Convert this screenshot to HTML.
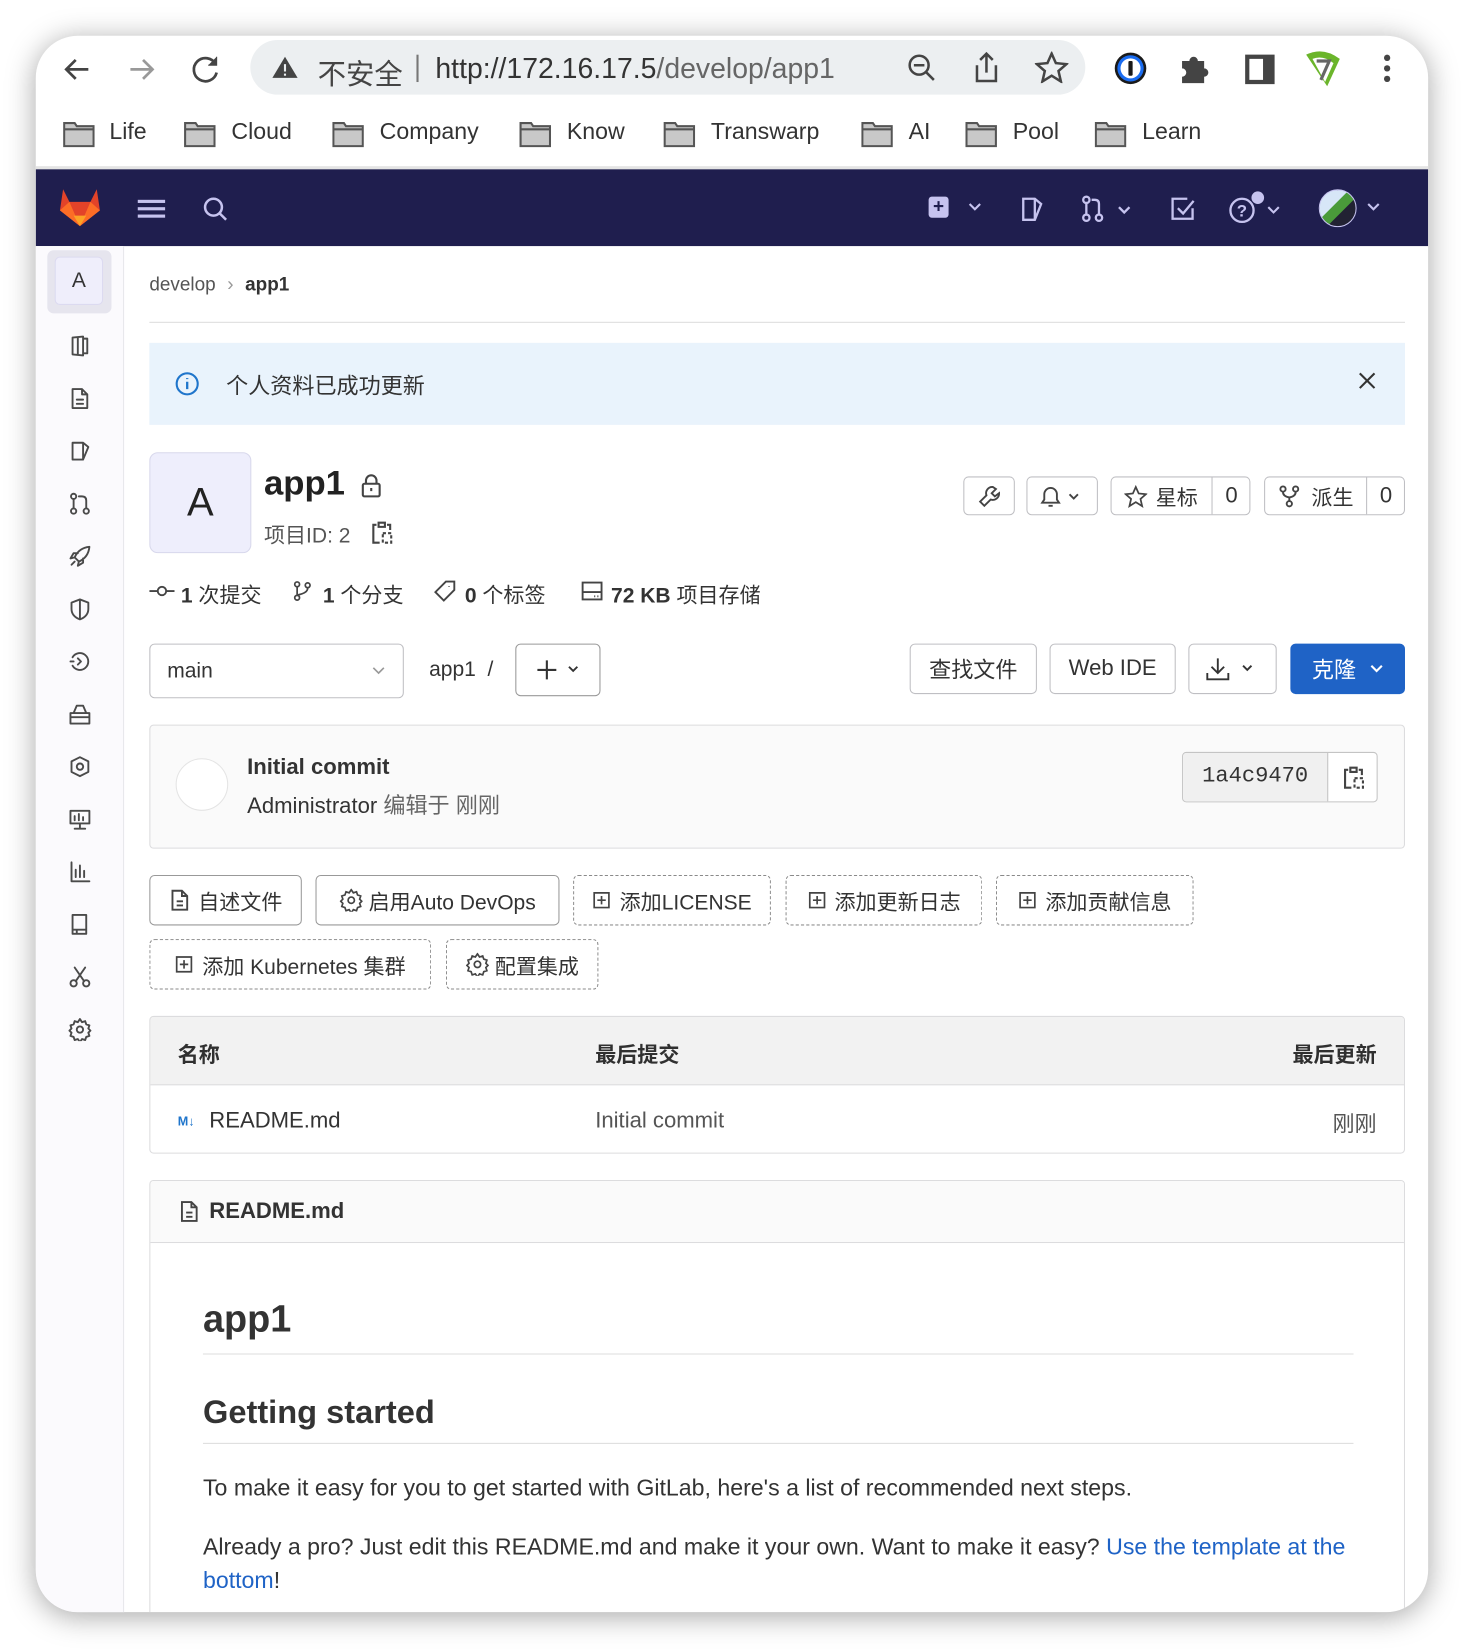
<!DOCTYPE html>
<html><head><meta charset="utf-8"><style>
*{box-sizing:border-box;margin:0;padding:0}
html,body{width:1466px;height:1650px;overflow:hidden;background:#fff}
body{font-family:"Liberation Sans","Noto Sans CJK SC",sans-serif;color:#303030}
#s{position:absolute;left:0;top:0;width:1394px;height:1568px;transform:scale(1.05165);transform-origin:0 0}
.a{position:absolute}
#win{left:34px;top:34px;width:1324px;height:1499px;border-radius:40px;box-shadow:0 4px 28px rgba(0,0,0,.35);background:#fff;overflow:hidden}
.t{position:absolute;white-space:nowrap}
.btn{position:absolute;border:1px solid #bfbfc3;border-radius:5px;background:#fff;display:flex;align-items:center;justify-content:center;font-size:21px;color:#333}
.dash{border:1.5px dashed #8a8a8a}
svg{display:block}
.ic{stroke:#4a4a4a;fill:none;stroke-width:1.8;stroke-linecap:round;stroke-linejoin:round}
.side svg{position:absolute;left:31px}
</style></head><body><div id="s">
<div id="win" class="a">
 <svg class="a" style="left:24px;top:16px" width="32" height="32" viewBox="0 0 32 32"><path d="M26 16H6M14 7l-9 9 9 9" stroke="#444" stroke-width="2.6" fill="none"/></svg>
 <svg class="a" style="left:84px;top:16px" width="32" height="32" viewBox="0 0 32 32"><path d="M6 16h20M18 7l9 9-9 9" stroke="#999" stroke-width="2.6" fill="none"/></svg>
 <svg class="a" style="left:146px;top:16px" width="32" height="32" viewBox="0 0 32 32"><path d="M25 11A11 11 0 1 0 26 19" stroke="#444" stroke-width="2.6" fill="none"/><path d="M26 4v8h-8" fill="#444" stroke="#444" stroke-width="1"/></svg>
 <div class="a" style="left:204px;top:4px;width:794px;height:52px;border-radius:26px;background:#eceff1"></div>
 <svg class="a" style="left:224px;top:18px" width="26" height="24" viewBox="0 0 26 24"><path d="M13 2L25 22H1z" fill="#444"/><rect x="12" y="9" width="2" height="7" fill="#eceff1"/><rect x="12" y="18" width="2" height="2" fill="#eceff1"/></svg>
 <div class="t" style="left:268px;top:15px;font-size:27px;color:#444">不安全</div>
 <div class="a" style="left:362px;top:18px;width:2px;height:26px;background:#777"></div>
 <div class="t" style="left:380px;top:16px;font-size:27px;color:#333">http://172.16.17.5<span style="color:#666">/develop/app1</span></div>
 <svg class="a" style="left:828px;top:16px" width="30" height="30" viewBox="0 0 30 30"><circle cx="12" cy="12" r="9" stroke="#444" stroke-width="2.4" fill="none"/><path d="M7 12h10M19 19l7 7" stroke="#444" stroke-width="2.4"/></svg>
 <svg class="a" style="left:890px;top:14px" width="28" height="32" viewBox="0 0 28 32"><path d="M14 3v18M8 9l6-6 6 6M5 14v15h18V14" stroke="#444" stroke-width="2.4" fill="none"/></svg>
 <svg class="a" style="left:950px;top:15px" width="32" height="30" viewBox="0 0 32 30"><path d="M16 2l4 9 10 1-7.5 6.5 2.3 10L16 23l-8.8 5.5 2.3-10L2 12l10-1z" stroke="#444" stroke-width="2.4" fill="none"/></svg>
 <svg class="a" style="left:1024px;top:14px" width="34" height="34" viewBox="0 0 34 34"><circle cx="17" cy="17" r="15" fill="#1a1a1a"/><circle cx="17" cy="17" r="12.5" fill="#1a6cf0"/><circle cx="17" cy="17" r="9.5" fill="#fff"/><rect x="15" y="10" width="4" height="14" rx="1" fill="#1a1a1a"/></svg>
 <svg class="a" style="left:1086px;top:16px" width="32" height="30" viewBox="0 0 32 30"><path d="M4 8h7a4 4 0 1 1 8 0h6v7a4 4 0 1 1 0 8v6H4v-6a4 4 0 1 0 0-8z" fill="#444"/></svg>
 <div class="a" style="left:1150px;top:18px;width:28px;height:28px;border:4px solid #444;border-right-width:11px"></div>
 <svg class="a" style="left:1204px;top:12px" width="40" height="40" viewBox="0 0 40 40"><path d="M4 6q16-8 32 4L24 36z" fill="#6bb52b"/><path d="M10 10q10-4 20 4l-8 18z" fill="#fff"/><path d="M14 12h12l-8 18" stroke="#666" stroke-width="3" fill="none"/></svg>
 <div class="a" style="left:1282px;top:18px;width:6px;height:6px;border-radius:3px;background:#444;box-shadow:0 10px 0 #444,0 20px 0 #444"></div>
 <div class="a" style="left:0;top:70px;width:1324px;height:56px;font-size:22px;color:#333">
  <svg class="a" style="left:26px;top:10px;" width="30" height="26" viewBox="0 0 30 26"><path d="M1 3h10l2 3h16v19H1z" fill="#c8c8c8" stroke="#555" stroke-width="2"/><path d="M1 9h28" stroke="#555" stroke-width="2"/></svg><div class="t" style="left:70px;top:8px">Life</div>
  <svg class="a" style="left:141px;top:10px;" width="30" height="26" viewBox="0 0 30 26"><path d="M1 3h10l2 3h16v19H1z" fill="#c8c8c8" stroke="#555" stroke-width="2"/><path d="M1 9h28" stroke="#555" stroke-width="2"/></svg><div class="t" style="left:186px;top:8px">Cloud</div>
  <svg class="a" style="left:282px;top:10px;" width="30" height="26" viewBox="0 0 30 26"><path d="M1 3h10l2 3h16v19H1z" fill="#c8c8c8" stroke="#555" stroke-width="2"/><path d="M1 9h28" stroke="#555" stroke-width="2"/></svg><div class="t" style="left:327px;top:8px">Company</div>
  <svg class="a" style="left:460px;top:10px;" width="30" height="26" viewBox="0 0 30 26"><path d="M1 3h10l2 3h16v19H1z" fill="#c8c8c8" stroke="#555" stroke-width="2"/><path d="M1 9h28" stroke="#555" stroke-width="2"/></svg><div class="t" style="left:505px;top:8px">Know</div>
  <svg class="a" style="left:597px;top:10px;" width="30" height="26" viewBox="0 0 30 26"><path d="M1 3h10l2 3h16v19H1z" fill="#c8c8c8" stroke="#555" stroke-width="2"/><path d="M1 9h28" stroke="#555" stroke-width="2"/></svg><div class="t" style="left:642px;top:8px">Transwarp</div>
  <svg class="a" style="left:785px;top:10px;" width="30" height="26" viewBox="0 0 30 26"><path d="M1 3h10l2 3h16v19H1z" fill="#c8c8c8" stroke="#555" stroke-width="2"/><path d="M1 9h28" stroke="#555" stroke-width="2"/></svg><div class="t" style="left:830px;top:8px">AI</div>
  <svg class="a" style="left:884px;top:10px;" width="30" height="26" viewBox="0 0 30 26"><path d="M1 3h10l2 3h16v19H1z" fill="#c8c8c8" stroke="#555" stroke-width="2"/><path d="M1 9h28" stroke="#555" stroke-width="2"/></svg><div class="t" style="left:929px;top:8px">Pool</div>
  <svg class="a" style="left:1007px;top:10px;" width="30" height="26" viewBox="0 0 30 26"><path d="M1 3h10l2 3h16v19H1z" fill="#c8c8c8" stroke="#555" stroke-width="2"/><path d="M1 9h28" stroke="#555" stroke-width="2"/></svg><div class="t" style="left:1052px;top:8px">Learn</div>
 </div>
 <div class="a" style="left:0;top:124px;width:1324px;height:3px;background:#e4e4e4"></div>
 <div class="a" style="left:0;top:127px;width:1324px;height:73px;background:#1f1e4e"></div>
 <svg class="a" style="left:22px;top:144px" width="40" height="38" viewBox="0 0 40 38"><path d="M20 37L1 22 4 2l6 12h20l6-12 3 20z" fill="#e24329"/><path d="M20 37L1 22 10 14z" fill="#fc6d26"/><path d="M20 37l19-15-9-8z" fill="#fc6d26"/><path d="M20 37l-6-10h12z" fill="#fca326"/></svg>
 <div class="a" style="left:97px;top:156px;width:26px;height:3px;background:#c6c3ef;box-shadow:0 7px 0 #c6c3ef,0 14px 0 #c6c3ef"></div>
 <svg class="a" style="left:158px;top:152px" width="26" height="26" viewBox="0 0 26 26"><circle cx="11" cy="11" r="8" stroke="#c6c3ef" stroke-width="2.4" fill="none"/><path d="M17 17l6 6" stroke="#c6c3ef" stroke-width="2.4"/></svg>
 <div class="a" style="left:849px;top:153px;width:19px;height:20px;background:#c6c3ef;border-radius:3px;color:#1f1e4e;font-weight:bold;font-size:18px;line-height:19px;text-align:center">+</div>
 <svg class="a" style="left:885px;top:156px" width="16" height="14" viewBox="0 0 16 14"><path d="M3 4l5 5 5-5" stroke="#c6c3ef" stroke-width="2" fill="none"/></svg>
 <svg class="a" style="left:936px;top:152px" width="24" height="26" viewBox="0 0 24 26"><path d="M3 3h11l6 5-6 15H3z" stroke="#c6c3ef" stroke-width="2.2" fill="none"/><path d="M14 3v20" stroke="#c6c3ef" stroke-width="2.2"/></svg>
 <svg class="a" style="left:994px;top:151px" width="56" height="28" viewBox="0 0 56 28"><g stroke="#c6c3ef" stroke-width="2.2" fill="none"><circle cx="5" cy="5" r="3"/><circle cx="5" cy="22" r="3"/><circle cx="17" cy="22" r="3"/><path d="M5 8v11M17 19V9q0-4-4-4h-3"/><path d="M36 12l5 5 5-5"/></g></svg>
 <svg class="a" style="left:1078px;top:152px" width="26" height="26" viewBox="0 0 26 26"><path d="M22 12v10H3V3h14" stroke="#c6c3ef" stroke-width="2.2" fill="none"/><path d="M8 12l5 5 10-12" stroke="#c6c3ef" stroke-width="2.2" fill="none"/></svg>
 <svg class="a" style="left:1134px;top:146px" width="56" height="36" viewBox="0 0 56 36"><circle cx="13" cy="20" r="11" stroke="#c6c3ef" stroke-width="2.2" fill="none"/><text x="8" y="26" font-size="16" fill="#c6c3ef" font-family="Liberation Sans" font-weight="bold">?</text><circle cx="28" cy="8" r="6" fill="#c6c3ef"/><path d="M38 17l5 5 5-5" stroke="#c6c3ef" stroke-width="2" fill="none"/></svg>
 <div class="a" style="left:1220px;top:146px;width:36px;height:36px;border-radius:50%;border:1.5px solid #c6c3ef;background:linear-gradient(135deg,#d7e6f7 40%,#4a9b3a 41%,#4a9b3a 60%,#223 61%)"></div>
 <svg class="a" style="left:1264px;top:156px" width="16" height="14" viewBox="0 0 16 14"><path d="M3 4l5 5 5-5" stroke="#c6c3ef" stroke-width="2" fill="none"/></svg>
 <div class="a side" style="left:0;top:200px;width:84px;height:1300px;background:#fbfafd;border-right:1px solid #e8e8ec">
  <div class="a" style="left:11px;top:4px;width:61px;height:60px;border-radius:6px;background:#e6e5ee"></div>
  <div class="a" style="left:18px;top:10px;width:46px;height:46px;border-radius:5px;background:#efeefb;border:1px solid #dcdaf0;font-size:20px;text-align:center;line-height:44px;color:#333">A</div>
  <svg style="top:84px" width="22" height="22" viewBox="0 0 22 22"><path class="ic" d="M4 3l10-1v18l-10-1zM14 4h4v14h-4M9 3v16"/></svg>
  <svg style="top:134px" width="22" height="22" viewBox="0 0 22 22"><path class="ic" d="M4 2h9l5 5v13H4zM13 2v5h5M8 12h6M8 16h6"/></svg>
  <svg style="top:184px" width="22" height="22" viewBox="0 0 22 22"><path class="ic" d="M4 3h10l5 4-5 12H4zM14 3v16"/></svg>
  <svg style="top:234px" width="22" height="22" viewBox="0 0 22 22"><g class="ic"><circle cx="5" cy="4" r="2.5"/><circle cx="5" cy="18" r="2.5"/><circle cx="17" cy="18" r="2.5"/><path d="M5 7v8M17 15V8q0-4-4-4h-3"/></g></svg>
  <svg style="top:284px" width="22" height="22" viewBox="0 0 22 22"><path class="ic" d="M20 2Q10 3 6 12l4 4q9-4 10-14zM6 12l-4 1 3-5h4M10 16l-1 4 5-3v-4M3 19l3-3"/></svg>
  <svg style="top:334px" width="22" height="22" viewBox="0 0 22 22"><path class="ic" d="M11 2l8 3v6q0 7-8 10-8-3-8-10V5zM11 2v19"/></svg>
  <svg style="top:384px" width="22" height="22" viewBox="0 0 22 22"><path class="ic" d="M4 7a8 8 0 1 1 0 8M9 8l3 3-3 3M2 11h3"/></svg>
  <svg style="top:434px" width="22" height="22" viewBox="0 0 22 22"><path class="ic" d="M2 10h18v10H2zM5 10l3-7h6l3 7M2 14h18"/></svg>
  <svg style="top:484px" width="22" height="22" viewBox="0 0 22 22"><path class="ic" d="M11 2l8 4v10l-8 4-8-4V6zM11 8a3 3 0 1 0 .1 0"/></svg>
  <svg style="top:534px" width="22" height="22" viewBox="0 0 22 22"><path class="ic" d="M2 3h18v12H2zM11 15v4M6 20h10M6 12V8M10 12V6M14 12V9"/></svg>
  <svg style="top:584px" width="22" height="22" viewBox="0 0 22 22"><path class="ic" d="M3 2v18h17M7 16V9M11 16V5M15 16v-6"/></svg>
  <svg style="top:634px" width="22" height="22" viewBox="0 0 22 22"><path class="ic" d="M4 2h13v18H4zM4 16h13M8 20v-4"/></svg>
  <svg style="top:684px" width="22" height="22" viewBox="0 0 22 22"><g class="ic"><circle cx="5" cy="17" r="3"/><circle cx="17" cy="17" r="3"/><path d="M7 15L16 2M15 15L6 2"/></g></svg>
  <svg style="top:734px" width="22" height="22" viewBox="0 0 22 22"><g class="ic"><circle cx="11" cy="11" r="3"/><path d="M11 1l2 3 3-1 1 3 3 1-1 3 2 2-2 2 1 3-3 1-1 3-3-1-2 3-2-3-3 1-1-3-3-1 1-3-2-2 2-2-1-3 3-1 1-3 3 1z"/></g></svg>
 </div>
 <div class="a" style="left:108px;top:0;width:1194px;height:1499px">
  <div class="t" style="left:0;top:226px;font-size:18px;color:#555">develop <span style="color:#999;margin:0 6px">›</span> <b style="color:#333">app1</b></div>
  <div class="a" style="left:0;top:272px;width:1194px;height:1px;background:#ddd"></div>
  <div class="a" style="left:0;top:292px;width:1194px;height:78px;background:#e9f3fc"></div>
  <svg class="a" style="left:24px;top:319px" width="24" height="24" viewBox="0 0 24 24"><circle cx="12" cy="12" r="10" stroke="#1f75cb" stroke-width="2" fill="none"/><path d="M12 10v7M12 6.5v1" stroke="#1f75cb" stroke-width="2.2"/></svg>
  <div class="t" style="left:73px;top:317px;font-size:21px;color:#333">个人资料已成功更新</div>
  <svg class="a" style="left:1148px;top:318px" width="20" height="20" viewBox="0 0 20 20"><path d="M3 3l14 14M17 3L3 17" stroke="#333" stroke-width="2"/></svg>

  <div class="a" style="left:0;top:396px;width:97px;height:96px;border-radius:8px;background:#eeeefc;border:1px solid #d8d8ec;font-size:38px;text-align:center;line-height:94px;color:#222">A</div>
  <div class="t" style="left:109px;top:406px;font-size:33px;font-weight:bold;color:#222">app1</div>
  <svg class="a" style="left:200px;top:416px" width="22" height="24" viewBox="0 0 22 24"><rect x="3" y="10" width="16" height="12" rx="1.5" stroke="#444" stroke-width="2" fill="none"/><path d="M6 10V7a5 5 0 0 1 10 0v3M11 14v3" stroke="#444" stroke-width="2" fill="none"/></svg>
  <div class="t" style="left:109px;top:459px;font-size:20px;color:#555">项目ID: 2</div>
  <svg class="a" style="left:210px;top:460px" width="22" height="26" viewBox="0 0 22 26"><path d="M8 3h6v4H8zM6 5H3v17h6M16 5h3v5" stroke="#444" stroke-width="2" fill="none"/><path d="M12 13h8v9h-8z" stroke="#444" stroke-width="2" stroke-dasharray="3 2" fill="none"/></svg>

  <div class="btn" style="left:774px;top:419px;width:49px;height:37px"><svg width="22" height="22" viewBox="0 0 22 22"><path d="M14 2a6 6 0 0 0-6 8L2 16l4 4 6-6a6 6 0 0 0 8-6l-4 3-3-3 4-4z" stroke="#444" stroke-width="1.8" fill="none"/></svg></div>
  <div class="btn" style="left:834px;top:419px;width:68px;height:37px"><svg width="46" height="22" viewBox="0 0 46 22"><path d="M4 17h16l-2-3V9a6 6 0 0 0-12 0v5zM10 20h4" stroke="#444" stroke-width="1.8" fill="none"/><path d="M30 9l4 4 4-4" stroke="#444" stroke-width="1.8" fill="none"/></svg></div>
  <div class="btn" style="left:914px;top:419px;width:133px;height:37px;justify-content:flex-start">
   <svg style="margin-left:12px" width="22" height="22" viewBox="0 0 32 30"><path d="M16 2l4 9 10 1-7.5 6.5 2.3 10L16 23l-8.8 5.5 2.3-10L2 12l10-1z" stroke="#444" stroke-width="2.4" fill="none"/></svg>
   <span style="margin-left:8px;font-size:20px">星标</span><span style="position:absolute;left:95px;top:0;height:35px;border-left:1px solid #bfbfc3;width:37px;text-align:center;line-height:35px">0</span></div>
  <div class="btn" style="left:1060px;top:419px;width:134px;height:37px;justify-content:flex-start">
   <svg style="margin-left:12px" width="22" height="22" viewBox="0 0 22 22"><g stroke="#444" stroke-width="1.8" fill="none"><circle cx="5" cy="4" r="2.5"/><circle cx="17" cy="4" r="2.5"/><circle cx="11" cy="18" r="2.5"/><path d="M5 7q0 4 6 5 6-1 6-5M11 12v3"/></g></svg>
   <span style="margin-left:10px;font-size:20px">派生</span><span style="position:absolute;left:96px;top:0;height:35px;border-left:1px solid #bfbfc3;width:37px;text-align:center;line-height:35px">0</span></div>

  <div class="a" style="left:0;top:516px;font-size:20px;color:#333;white-space:nowrap">
   <svg class="a" style="left:0;top:5px" width="24" height="14" viewBox="0 0 24 14"><circle cx="12" cy="7" r="4" stroke="#444" stroke-width="1.8" fill="none"/><path d="M0 7h8M16 7h8" stroke="#444" stroke-width="1.8"/></svg>
   <span class="t" style="left:30px;top:0"><b>1</b> 次提交</span>
   <svg class="a" style="left:136px;top:1px" width="20" height="22" viewBox="0 0 22 22"><g stroke="#444" stroke-width="1.8" fill="none"><circle cx="5" cy="4" r="2.5"/><circle cx="5" cy="18" r="2.5"/><circle cx="16" cy="5" r="2.5"/><path d="M5 7v8M16 8q0 5-10 7"/></g></svg>
   <span class="t" style="left:165px;top:0"><b>1</b> 个分支</span>
   <svg class="a" style="left:270px;top:1px" width="22" height="22" viewBox="0 0 22 22"><path d="M12 2h8v8L10 20 2 12zM15 6.5v.5" stroke="#444" stroke-width="1.8" fill="none"/></svg>
   <span class="t" style="left:300px;top:0"><b>0</b> 个标签</span>
   <svg class="a" style="left:410px;top:2px" width="22" height="20" viewBox="0 0 22 20"><path d="M2 2h18v16H2zM2 11h18M13 15h1M16 15h1" stroke="#444" stroke-width="1.8" fill="none"/></svg>
   <span class="t" style="left:439px;top:0"><b>72 KB</b> 项目存储</span>
  </div>

  <div class="btn" style="left:0;top:578px;width:242px;height:52px;justify-content:space-between;padding:0 16px;font-size:20px">main<svg width="14" height="10" viewBox="0 0 14 10"><path d="M2 2l5 5 5-5" stroke="#999" stroke-width="1.6" fill="none"/></svg></div>
  <div class="t" style="left:266px;top:592px;font-size:20px;color:#333">app1 &nbsp;/</div>
  <div class="btn" style="left:348px;top:578px;width:81px;height:50px;border-color:#999"><svg width="50" height="24" viewBox="0 0 50 24"><path d="M5 12h18M14 3v18" stroke="#333" stroke-width="2"/><path d="M35 9l4 4 4-4" stroke="#333" stroke-width="1.8" fill="none"/></svg></div>
  <div class="btn" style="left:723px;top:578px;width:121px;height:48px">查找文件</div>
  <div class="btn" style="left:856px;top:578px;width:120px;height:48px">Web IDE</div>
  <div class="btn" style="left:988px;top:578px;width:84px;height:48px"><svg width="54" height="26" viewBox="0 0 54 26"><path d="M13 3v14M7 11l6 6 6-6M3 17v6h20v-6" stroke="#333" stroke-width="1.8" fill="none"/><path d="M37 10l4 4 4-4" stroke="#333" stroke-width="1.8" fill="none"/></svg></div>
  <div class="btn" style="left:1085px;top:578px;width:109px;height:48px;background:#1f63c6;border-color:#1f63c6;color:#fff">克隆<svg style="margin-left:12px" width="14" height="10" viewBox="0 0 14 10"><path d="M2 2l5 5 5-5" stroke="#fff" stroke-width="2" fill="none"/></svg></div>

  <div class="a" style="left:0;top:655px;width:1194px;height:118px;background:#fafafa;border:1px solid #dcdcde;border-radius:4px"></div>
  <div class="a" style="left:25px;top:687px;width:50px;height:50px;border-radius:50%;border:1px solid #e4e4e4;background:#fff"></div>
  <div class="t" style="left:93px;top:684px;font-size:21px;font-weight:bold;color:#333">Initial commit</div>
  <div class="t" style="left:93px;top:716px;font-size:21px;color:#333">Administrator <span style="color:#666">编辑于 刚刚</span></div>
  <div class="a" style="left:982px;top:681px;width:186px;height:48px;border:1px solid #c4c4c4;border-radius:4px;background:#fff;overflow:hidden">
   <div class="a" style="left:0;top:0;width:138px;height:46px;background:#f0f0f0;border-right:1px solid #c4c4c4;font-family:'Liberation Mono',monospace;font-size:21px;line-height:46px;text-align:center;color:#333">1a4c9470</div>
   <svg class="a" style="left:151px;top:11px" width="22" height="26" viewBox="0 0 22 26"><path d="M8 3h6v4H8zM6 5H3v17h6M16 5h3v5" stroke="#444" stroke-width="2" fill="none"/><path d="M12 13h8v9h-8z" stroke="#444" stroke-width="2" stroke-dasharray="3 2" fill="none"/></svg>
  </div>

  <div class="btn" style="left:0;top:798px;width:145px;height:48px;border-color:#999;font-size:20px"><svg style="margin-right:8px" width="20" height="22" viewBox="0 0 20 22"><path d="M3 2h9l5 5v13H3zM12 2v5h5M7 12h6M7 16h6" stroke="#444" stroke-width="1.8" fill="none"/></svg>自述文件</div>
  <div class="btn" style="left:158px;top:798px;width:232px;height:48px;border-color:#999;font-size:20px"><svg style="margin-right:6px" width="22" height="22" viewBox="0 0 22 22"><g stroke="#444" stroke-width="1.6" fill="none"><circle cx="11" cy="11" r="3"/><path d="M11 1l2 3 3-1 1 3 3 1-1 3 2 2-2 2 1 3-3 1-1 3-3-1-2 3-2-3-3 1-1-3-3-1 1-3-2-2 2-2-1-3 3-1 1-3 3 1z"/></g></svg>启用Auto DevOps</div>
  <div class="btn dash" style="left:403px;top:798px;width:188px;height:48px;font-size:20px"><svg style="margin-right:8px" width="18" height="18" viewBox="0 0 18 18"><path d="M2 2h14v14H2zM9 5v8M5 9h8" stroke="#444" stroke-width="1.6" fill="none"/></svg>添加LICENSE</div>
  <div class="btn dash" style="left:605px;top:798px;width:187px;height:48px;font-size:20px"><svg style="margin-right:8px" width="18" height="18" viewBox="0 0 18 18"><path d="M2 2h14v14H2zM9 5v8M5 9h8" stroke="#444" stroke-width="1.6" fill="none"/></svg>添加更新日志</div>
  <div class="btn dash" style="left:805px;top:798px;width:188px;height:48px;font-size:20px"><svg style="margin-right:8px" width="18" height="18" viewBox="0 0 18 18"><path d="M2 2h14v14H2zM9 5v8M5 9h8" stroke="#444" stroke-width="1.6" fill="none"/></svg>添加贡献信息</div>
  <div class="btn dash" style="left:0;top:859px;width:268px;height:48px;font-size:20px"><svg style="margin-right:8px" width="18" height="18" viewBox="0 0 18 18"><path d="M2 2h14v14H2zM9 5v8M5 9h8" stroke="#444" stroke-width="1.6" fill="none"/></svg>添加 Kubernetes 集群</div>
  <div class="btn dash" style="left:282px;top:859px;width:145px;height:48px;font-size:20px"><svg style="margin-right:6px" width="22" height="22" viewBox="0 0 22 22"><g stroke="#444" stroke-width="1.6" fill="none"><circle cx="11" cy="11" r="3"/><path d="M11 1l2 3 3-1 1 3 3 1-1 3 2 2-2 2 1 3-3 1-1 3-3-1-2 3-2-3-3 1-1-3-3-1 1-3-2-2 2-2-1-3 3-1 1-3 3 1z"/></g></svg>配置集成</div>

  <div class="a" style="left:0;top:932px;width:1194px;height:131px;border:1px solid #dcdcde;border-radius:4px;overflow:hidden">
   <div class="a" style="left:0;top:0;width:1194px;height:65px;background:#f2f2f2;border-bottom:1px solid #dcdcde"></div>
   <div class="t" style="left:26px;top:20px;font-size:20px;font-weight:bold">名称</div>
   <div class="t" style="left:423px;top:20px;font-size:20px;font-weight:bold">最后提交</div>
   <div class="t" style="right:26px;top:20px;font-size:20px;font-weight:bold">最后更新</div>
   <div class="t" style="left:26px;top:92px;font-size:12px;font-weight:bold;color:#1f75cb">M↓</div>
   <div class="t" style="left:56px;top:87px;font-size:21px;color:#333">README.md</div>
   <div class="t" style="left:423px;top:87px;font-size:21px;color:#555">Initial commit</div>
   <div class="t" style="right:26px;top:86px;font-size:21px;color:#555">刚刚</div>
  </div>

  <div class="a" style="left:0;top:1088px;width:1194px;height:450px;border:1px solid #dcdcde;border-radius:4px;overflow:hidden">
   <div class="a" style="left:0;top:0;width:1194px;height:59px;background:#fafafa;border-bottom:1px solid #dcdcde"></div>
   <svg class="a" style="left:27px;top:18px" width="20" height="22" viewBox="0 0 20 22"><path d="M3 2h9l5 5v13H3zM12 2v5h5M7 12h6M7 16h6" stroke="#444" stroke-width="1.8" fill="none"/></svg>
   <div class="t" style="left:56px;top:17px;font-size:21px;font-weight:bold;color:#333">README.md</div>
   <div class="t" style="left:50px;top:110px;font-size:36px;font-weight:bold;color:#333">app1</div>
   <div class="a" style="left:50px;top:164px;width:1094px;height:1px;background:#ddd"></div>
   <div class="t" style="left:50px;top:202px;font-size:31px;font-weight:bold;color:#333">Getting started</div>
   <div class="a" style="left:50px;top:249px;width:1094px;height:1px;background:#ddd"></div>
   <div class="t" style="left:50px;top:279px;font-size:22px;color:#333">To make it easy for you to get started with GitLab, here's a list of recommended next steps.</div>
   <div class="t" style="left:50px;top:335px;font-size:22px;color:#333">Already a pro? Just edit this README.md and make it your own. Want to make it easy? <span style="color:#1f63c6">Use the template at the</span></div>
   <div class="t" style="left:50px;top:367px;font-size:22px;color:#333"><span style="color:#1f63c6">bottom</span>!</div>
  </div>
 </div>
</div>
</div></body></html>
